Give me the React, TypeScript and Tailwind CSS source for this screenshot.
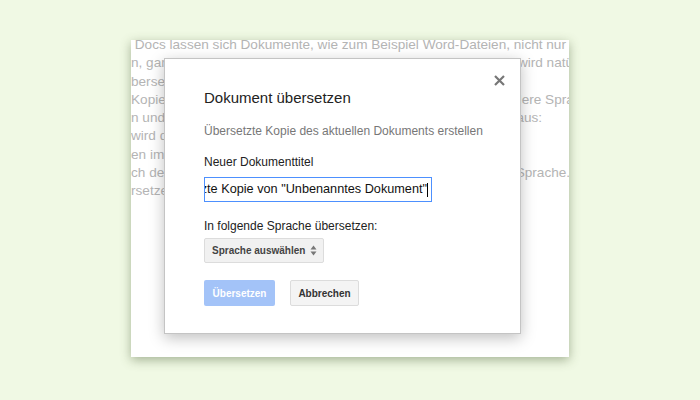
const docLines = [
  ' Docs lassen sich Dokumente, wie zum Beispiel Word-Dateien, nicht nur',
  'n, ganz ohne Büro-Programm, sondern auch übersetzen. Dabei wird natürlich',
  'bersetzte Kopie des Dokuments angelegt.',
  'Kopie des Dokuments lässt sich so ganz simpel auch in eine andere Sprache',
  'n und Formatierungen bleiben dann erhalten. Das geht ganz so aus:',
  'wird das gewünschte Dokument geöffnet.',
  'en im Menü auf Tools, Dokument übersetzen.',
  'ch den Titel für die Kopie eingeben und wählen die gewünschte Sprache.',
  'rsetzen klicken, fertig.',
];

function ArrowsIcon() {
  return (
    <svg width="7" height="11" viewBox="0 0 7 11" className="shrink-0">
      <path d="M3.5 0.5 L6.5 4.5 H0.5 Z" fill="#777" />
      <path d="M3.5 10.5 L6.5 6.5 H0.5 Z" fill="#777" />
    </svg>
  );
}

function CloseIcon() {
  return (
    <svg width="11" height="11" viewBox="0 0 11 11">
      <path d="M1 1 L10 10 M10 1 L1 10" stroke="#777" strokeWidth="2.2" />
    </svg>
  );
}

export default function App() {
  return (
    <div
      className="w-[700px] h-[400px] bg-[#f0f9e4] pt-[40px] pl-[131px] overflow-hidden"
      style={{ fontFamily: '"Liberation Sans", Arial, sans-serif' }}
    >
      {/* Document page behind the dialog */}
      <div className="relative w-[438px] h-[317px] bg-white overflow-hidden shadow-[0_3px_10px_rgba(70,90,50,0.45)]">
        <div className="-mt-[4px] text-[13.6px] leading-[18.3px] text-[#b4b4b4]">
          {docLines.map((line, i) => (
            <div key={i} className="whitespace-pre">
              {line}
            </div>
          ))}
        </div>

        {/* Dialog */}
        <div className="absolute left-[33px] top-[18px] w-[357px] h-[276px] bg-white border border-[#c4c4c4] shadow-[0_4px_14px_rgba(0,0,0,0.25)] pl-[39px] pt-[29px] flex flex-col items-start">
          <button className="absolute top-[16px] right-[15px] w-[11px] h-[11px] flex">
            <CloseIcon />
          </button>

          <h2 className="text-[15px] leading-[20px] text-[#222]">Dokument übersetzen</h2>
          <p className="mt-[15px] text-[12px] leading-[16px] text-[#777]">
            Übersetzte Kopie des aktuellen Dokuments erstellen
          </p>

          <div className="mt-[15px] text-[12px] leading-[16px] text-[#222]">Neuer Dokumenttitel</div>
          <div className="mt-[7px] w-[228px] h-[25px] border border-[#4d90fe] flex items-center justify-end pr-[3px] overflow-hidden">
            <span className="whitespace-nowrap text-[12.7px] text-[#111]">
              Übersetzte Kopie von "Unbenanntes Dokument"
            </span>
            <span className="w-px h-[14px] bg-black shrink-0" />
          </div>

          <div className="mt-[16px] text-[12px] leading-[16px] text-[#222]">In folgende Sprache übersetzen:</div>
          <div className="mt-[4px] w-[120px] h-[25px] bg-[#f1f1f1] border border-[#dcdcdc] rounded-[2px] flex items-center justify-between pl-[7px] pr-[6px]">
            <span className="text-[10px] font-bold text-[#444]">Sprache auswählen</span>
            <ArrowsIcon />
          </div>

          <div className="mt-[17px] flex gap-[15px]">
            <button className="h-[26px] w-[71px] bg-[#a3c3f8] rounded-[2px] text-[10px] font-bold text-white">
              Übersetzen
            </button>
            <button className="h-[26px] w-[69px] bg-[#f4f4f4] border border-[#dcdcdc] rounded-[2px] text-[10px] font-bold text-[#333]">
              Abbrechen
            </button>
          </div>
        </div>
      </div>
    </div>
  );
}
